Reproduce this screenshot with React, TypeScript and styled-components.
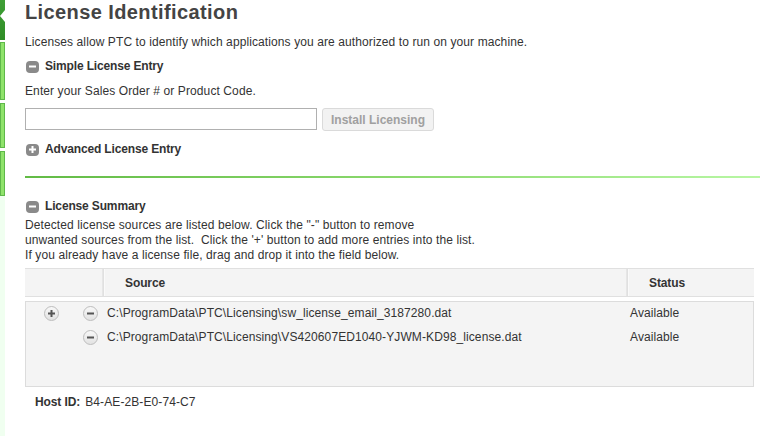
import styled, {createGlobalStyle} from "styled-components";

const GlobalStyle = createGlobalStyle`
    html, body {
        margin: 0;
        padding: 0;
        background: #ffffff;
    }

    body {
        font-family: "Liberation Sans", Arial, sans-serif;
        font-size: 12px;
        letter-spacing: 0.1px;
        color: #333333;
    }
`;

const Page = styled.div`
    display: flex;
    min-height: 436px;
`;

const Sidebar = styled.div`
    width: 5px;
    flex: 0 0 5px;
    display: flex;
    flex-direction: column;
    background: #f0fff0;
`;

const ActiveTab = styled.div`
    position: relative;
    height: 40px;
    background: linear-gradient(#3f9f36, #2f8d26);

    &::after {
        content: "";
        position: absolute;
        right: 0;
        top: 10px;
        border-top: 6px solid transparent;
        border-bottom: 6px solid transparent;
        border-right: 5px solid #ffffff;
    }
`;

const SideTab = styled.div<{ $height: number; $gap: number }>`
    box-sizing: border-box;
    height: ${p => p.$height}px;
    margin-top: ${p => p.$gap}px;
    background: #8fe36b;
    border: 1px solid #5fb84a;
    box-shadow: 0 -${p => p.$gap}px 0 #ffffff;
`;

const Main = styled.div`
    padding-left: 20px;
    flex: 1;
`;

const Title = styled.h1`
    margin: 0;
    font-size: 20px;
    line-height: 24px;
    font-weight: bold;
    letter-spacing: 0.4px;
    color: #444444;
`;

const Text = styled.p<{ $top: number }>`
    margin: ${p => p.$top}px 0 0;
    line-height: 15px;
`;

const Toggle = styled.div<{ $top: number }>`
    margin-top: ${p => p.$top}px;
    display: flex;
    align-items: center;
    gap: 6px;
    line-height: 15px;
    font-weight: bold;
    letter-spacing: -0.15px;
    padding-left: 1px;
`;

const ToggleIcon = styled.span`
    width: 13px;
    height: 12px;
    border-radius: 4px;
    background: #8a8a8a;
    display: flex;
    align-items: center;
    justify-content: center;
`;

const EntryRow = styled.div`
    margin-top: 9px;
    display: flex;
    align-items: flex-start;
    gap: 5px;
`;

const CodeInput = styled.input`
    box-sizing: border-box;
    width: 292px;
    height: 22px;
    margin: 0;
    border: 1px solid #b0b0b0;
    padding: 2px 4px;
    font: inherit;
`;

const InstallButton = styled.button`
    box-sizing: border-box;
    height: 23px;
    width: 112px;
    margin: 0;
    padding: 0;
    border: 1px solid #dadada;
    border-radius: 3px;
    background: #f2f2f2;
    color: #a0a0a0;
    font-family: inherit;
    font-size: 12px;
    font-weight: bold;
`;

const GreenRule = styled.div`
    margin-top: 19px;
    width: 735px;
    height: 2px;
    background: linear-gradient(to right, #62bb45, #8ad86d 50%, #b8f7a4);
`;

const Table = styled.div`
    width: 729px;
    margin-top: 5px;
`;

const HeaderRow = styled.div`
    box-sizing: border-box;
    height: 29px;
    display: grid;
    grid-template-columns: 78px 1fr 127px;
    background: #f4f4f4;
    border-top: 1px solid #e0e0e0;
    border-bottom: 1px solid #e0e0e0;
`;

const HeaderCell = styled.div<{ $divider?: boolean }>`
    display: flex;
    align-items: center;
    padding-left: 21px;
    font-weight: bold;
    letter-spacing: -0.1px;
    border-left: ${p => p.$divider ? "1px solid #e0e0e0" : "none"};
    box-shadow: ${p => p.$divider ? "inset 1px 0 #fafafa, -1px 0 #e6e6e6" : "none"};
`;

const Body = styled.div`
    box-sizing: border-box;
    margin-top: 4px;
    height: 86px;
    padding-top: 1px;
    background: #f4f4f4;
    border: 1px solid #dcdcdc;
    display: flex;
    flex-direction: column;
    gap: 4px;
`;

const SourceRow = styled.div`
    height: 20px;
    display: grid;
    grid-template-columns: 57px 24px 1fr 123px;
    align-items: center;
`;

const PlusCell = styled.div`
    padding-left: 18px;
    display: flex;
`;

const CircleButton = styled.span`
    box-sizing: border-box;
    width: 15px;
    height: 15px;
    border-radius: 50%;
    border: 1px solid #bdbdbd;
    background: linear-gradient(#f8f8f8, #e2e2e2);
    display: flex;
    align-items: center;
    justify-content: center;
`;

const HostLine = styled.div`
    margin-top: 8px;
    padding-left: 10px;
    line-height: 15px;
    display: flex;
    gap: 5px;
`;

const HostLabel = styled.span`
    font-weight: bold;
    letter-spacing: -0.1px;
`;

function MinusGlyph({color}: { color: string }) {
  return <svg width="9" height="9" viewBox="0 0 9 9">
    <rect x="1" y="3.5" width="7" height="2" fill={color}/>
  </svg>;
}

function PlusGlyph({color}: { color: string }) {
  return <svg width="9" height="9" viewBox="0 0 9 9">
    <rect x="1" y="3.5" width="7" height="2" fill={color}/>
    <rect x="3.5" y="1" width="2" height="7" fill={color}/>
  </svg>;
}

const sources = [
  {path: "C:\\ProgramData\\PTC\\Licensing\\sw_license_email_3187280.dat", status: "Available"},
  {path: "C:\\ProgramData\\PTC\\Licensing\\VS420607ED1040-YJWM-KD98_license.dat", status: "Available"},
];

export default function App() {
  return <Page>
    <GlobalStyle/>
    <Sidebar>
      <ActiveTab/>
      <SideTab $height={58} $gap={2}/>
      <SideTab $height={45} $gap={3}/>
      <SideTab $height={45} $gap={3}/>
    </Sidebar>
    <Main>
      <Title>License Identification</Title>
      <Text $top={11}>Licenses allow PTC to identify which applications you are authorized to run on your machine.</Text>

      <Toggle $top={9}>
        <ToggleIcon><MinusGlyph color="#ffffff"/></ToggleIcon>
        Simple License Entry
      </Toggle>
      <Text $top={10}>Enter your Sales Order # or Product Code.</Text>
      <EntryRow>
        <CodeInput type="text"/>
        <InstallButton>Install Licensing</InstallButton>
      </EntryRow>

      <Toggle $top={11}>
        <ToggleIcon><PlusGlyph color="#ffffff"/></ToggleIcon>
        Advanced License Entry
      </Toggle>

      <GreenRule/>

      <Toggle $top={21}>
        <ToggleIcon><MinusGlyph color="#ffffff"/></ToggleIcon>
        License Summary
      </Toggle>
      <Text $top={4}>
        Detected license sources are listed below. Click the "-" button to remove<br/>
        unwanted sources from the list.&nbsp; Click the '+' button to add more entries into the list.<br/>
        If you already have a license file, drag and drop it into the field below.
      </Text>

      <Table>
        <HeaderRow>
          <HeaderCell/>
          <HeaderCell $divider>Source</HeaderCell>
          <HeaderCell $divider>Status</HeaderCell>
        </HeaderRow>
        <Body>
          {sources.map((source, index) =>
              <SourceRow key={source.path}>
                <PlusCell>
                  {index === 0 && <CircleButton><PlusGlyph color="#555555"/></CircleButton>}
                </PlusCell>
                <CircleButton><MinusGlyph color="#555555"/></CircleButton>
                <span>{source.path}</span>
                <span>{source.status}</span>
              </SourceRow>
          )}
        </Body>
      </Table>

      <HostLine>
        <HostLabel>Host ID:</HostLabel>
        <span>B4-AE-2B-E0-74-C7</span>
      </HostLine>
    </Main>
  </Page>;
}
